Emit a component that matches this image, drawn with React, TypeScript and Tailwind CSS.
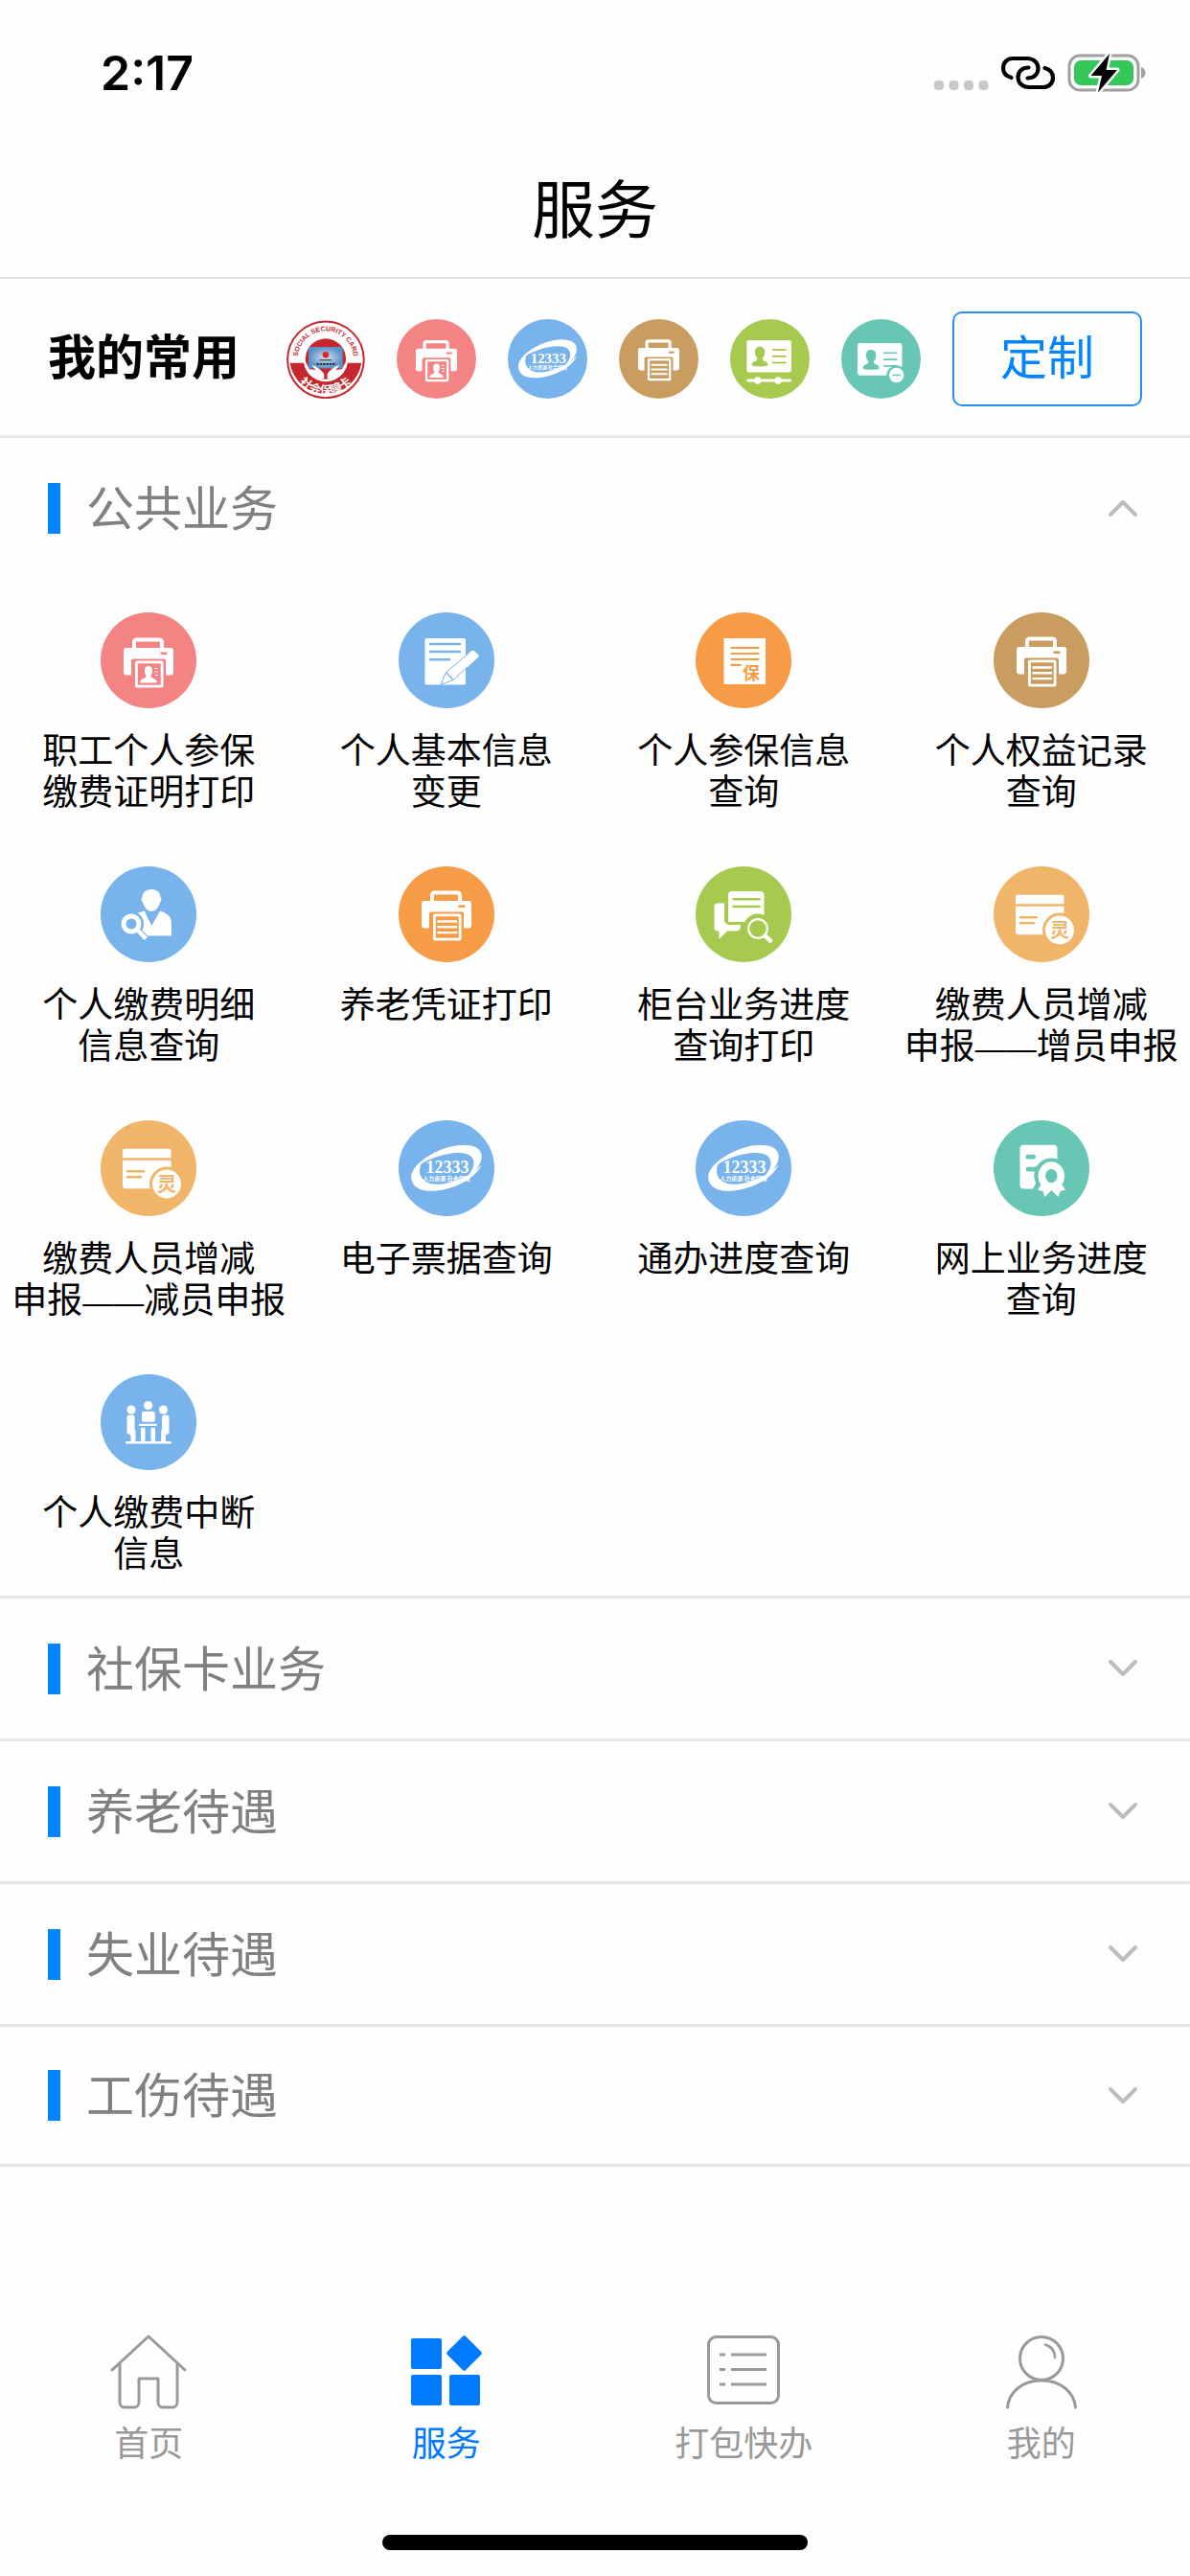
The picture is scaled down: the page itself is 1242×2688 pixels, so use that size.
import { useState } from "react";
import type { ReactNode } from "react";

const RED = "#f48384";
const BLUE = "#78b3ec";
const ORANGE = "#f69c47";
const BROWN = "#c99c60";
const GREEN = "#a6ca4f";
const SAND = "#f1b56a";
const TEAL = "#67c7b4";

/* ---------- round service icons, all on a 100 x 100 grid ---------- */

function Disc({ color, children }: { color: string; children: ReactNode }) {
  return (
    <svg viewBox="0 0 100 100" className="block h-full w-full" aria-hidden="true">
      <circle cx="50" cy="50" r="50" fill={color} />
      {children}
    </svg>
  );
}

function PrinterBody({ color }: { color: string }) {
  return (
    <g>
      <path d="M35 38V31a2.5 2.5 0 0 1 2.5-2.5H61.5A2.5 2.5 0 0 1 64 31V38" fill="none" stroke="#fff" strokeWidth="4" />
      <path d="M27 37H73a3 3 0 0 1 3 3V62.5a3 3 0 0 1-3 3H68V50.5a2 2 0 0 0-2-2H34a2 2 0 0 0-2 2V65.5H27a3 3 0 0 1-3-3V40a3 3 0 0 1 3-3Z" fill="#fff" />
      <rect x="62.5" y="41.5" width="7" height="2.5" fill={color} />
      <rect x="36" y="50.5" width="29.5" height="28" rx="2" fill="#fff" />
      <rect x="38.8" y="53.3" width="23.9" height="22.4" fill={color} />
    </g>
  );
}

function PrintPhoto() {
  return (
    <Disc color={RED}>
      <PrinterBody color={RED} />
      <path d="M50 56c3 0 4.2 2 4 5 0 2-.8 4-1.6 5 0 1.500.6 2 3 3 2.6 1 3.3 2 3.3 4.500H41.3c0-2.500.8-3.500 3.300-4.500 2.400-1 3-1.500 3-3-.8-1-1.600-3-1.600-5-.2-3 1-5 4-5Z" fill="#fff" />
      <path d="M56 58.500h4M56.500 62h3.500M57 65.500h3" stroke="#fff" strokeWidth="1.2" />
    </Disc>
  );
}

function PrintList({ color }: { color: string }) {
  return (
    <Disc color={color}>
      <g transform="translate(0 -1)">
        <PrinterBody color={color} />
        <path d="M40.5 58.5H61M40.5 64.3H61M40.5 70.1H61" stroke="#fff" strokeWidth="2.4" />
      </g>
    </Disc>
  );
}

function DocPen() {
  return (
    <Disc color={BLUE}>
      <rect x="27.5" y="27" width="42.5" height="48.5" rx="1.5" fill="#fff" />
      <path d="M33 33H64M33 41H64M33 49.3H53" stroke={BLUE} strokeWidth="2.6" strokeLinecap="round" />
      <path d="M44 75.5L49.5 62.5L76 40.3q1.5-1.3 3 0L83 44q1.3 1.5 0 3L57 70.5Z" fill="#fff" stroke={BLUE} strokeWidth="1" strokeLinejoin="round" />
      <path d="M49.5 62.5L57 70.5" stroke={BLUE} strokeWidth="1.2" />
      <path d="M76 40.3q1.5-1.3 3 0L83 44q1.3 1.5 0 3L72 57V44Z" fill="#fff" />
    </Disc>
  );
}

function DocBao() {
  return (
    <Disc color={ORANGE}>
      <rect x="29.5" y="27" width="43.5" height="48" fill="#fff" />
      <path d="M36.5 37H66.5M36.5 43H66.5M36.5 49H66.5M36.5 54.8H47.5" stroke={ORANGE} strokeWidth="2.2" />
      <text x="49" y="70" fontSize="18" fontWeight="700" fill={ORANGE}>保</text>
    </Disc>
  );
}

function PersonSearch() {
  return (
    <Disc color={BLUE}>
      <path d="M53 24c6 0 9.5 4 9.5 8.5 1.5.5 1 4-.5 5C60.5 43 57 47 53 47s-7.5-4-9-9.5c-1.5-1-2-4.5-.5-5C43.5 28 47 24 53 24Z" fill="#fff" />
      <path d="M45.500 46.500L53.300 62L62 46.500C70 49.500 74 52 74 60V72.500H40V50Z" fill="#fff" />
      <path d="M37.500 49L46 46.500L50 60L42 60Z" fill="#fff" />
      <circle cx="32" cy="60" r="13" fill={BLUE} />
      <path d="M37 66L47 76" stroke={BLUE} strokeWidth="8" />
      <circle cx="32" cy="60" r="8" fill="none" stroke="#fff" strokeWidth="5" />
      <path d="M39 67L47.5 75.5" stroke="#fff" strokeWidth="4.5" />
    </Disc>
  );
}

function ChatSearch() {
  return (
    <Disc color={GREEN}>
      <path d="M23 38.5H30V56a5 5 0 0 0 5 5H47V63a4.5 4.5 0 0 1-4.5 4.5H33L24.5 76V67.5H23a3.500 3.500 0 0 1-3.500-3.500V42a3.500 3.500 0 0 1 3.500-3.500Z" fill="#fff" />
      <path d="M38 26H67.5a4 4 0 0 1 4 4V58H34V30a4 4 0 0 1 4-4Z" fill="#fff" />
      <path d="M38.5 34.3H67.5M38.5 42H67.5" stroke={GREEN} strokeWidth="2.4" />
      <circle cx="65" cy="65" r="15.5" fill={GREEN} />
      <circle cx="65" cy="65" r="9.8" fill="none" stroke="#fff" strokeWidth="2.2" />
      <path d="M72.5 72.5L78 77.5" stroke="#fff" strokeWidth="4.5" strokeLinecap="round" />
    </Disc>
  );
}

function CardLing() {
  return (
    <Disc color={SAND}>
      <path d="M25 29.8H71.5a2 2 0 0 1 2 2V39.3H23V31.8a2 2 0 0 1 2-2Z" fill="#fff" />
      <path d="M23 41.8H73.5V71.3H26a3 3 0 0 1-3-3Z" fill="#fff" />
      <path d="M28 53.3H45M28 59.3H42" stroke={SAND} strokeWidth="2.6" strokeLinecap="round" />
      <circle cx="69" cy="66.5" r="18" fill={SAND} />
      <circle cx="69" cy="66.5" r="15" fill="#fff" />
      <text x="69" y="73.5" fontSize="20" fontWeight="700" textAnchor="middle" fill={SAND}>灵</text>
    </Disc>
  );
}

function Hotline() {
  return (
    <Disc color={BLUE}>
      <path d="M16 51C28 33 66 19 82 29C93 37 83 53 70 61C78 52 82 43 75 37C65 30 34 36 16 51Z" fill="#fff" />
      <path d="M25 43C9 52 10 68 24 72.500C42 78 78 66 87 46C74 61 46 69.500 33 66C22 62.500 19 53 25 43Z" fill="#fff" />
      <text x="51" y="55" fontSize="18" fontWeight="700" textAnchor="middle" fill="#fff" fontFamily="Liberation Serif, serif">12333</text>
      <text x="50" y="62.5" fontSize="6" fontWeight="700" textAnchor="middle" fill="#fff">人力资源 社会保障</text>
    </Disc>
  );
}

function DocRibbon() {
  return (
    <Disc color={TEAL}>
      <path d="M31.5 25.8H62.5a4 4 0 0 1 4 4V48H44V66L41 71.5H31.5a4 4 0 0 1-4-4V29.8a4 4 0 0 1 4-4Z" fill="#fff" />
      <rect x="33.5" y="35.8" width="10.5" height="4.8" rx="2.4" fill={TEAL} />
      <path d="M36 48.8H48V53.6H36a2.4 2.4 0 0 1 0-4.8Z" fill={TEAL} />
      <circle cx="60.3" cy="57.5" r="18" fill={TEAL} />
      <path d="M50.5 65L46 72.8L51.5 74L53.5 80L60.3 73L67.5 80L69.5 74L75 72.8L70 65Z" fill="#fff" />
      <ellipse cx="60.3" cy="58" rx="10" ry="11" fill={TEAL} stroke="#fff" strokeWidth="7.5" />
    </Disc>
  );
}

function Meeting() {
  return (
    <Disc color={BLUE}>
      <g fill="#fff">
        <circle cx="49.7" cy="32.5" r="4.6" />
        <circle cx="32" cy="37" r="4.6" />
        <circle cx="65.5" cy="37" r="4.6" />
        <rect x="43" y="38.8" width="13.8" height="11" rx="2" />
        <rect x="40" y="51.7" width="19" height="2.4" rx="1" />
        <rect x="42" y="55.8" width="4.5" height="14" />
        <rect x="52.5" y="55.8" width="4.5" height="14" />
        <path d="M29.500 42.500H33.500a2 2 0 0 1 2 2V57l1 2V70H31.500V63.500L27.500 61.500V44.500a2 2 0 0 1 2-2Z" />
        <path d="M69.500 42.500H66a2 2 0 0 0-2 2V57l-.8 2V70H68V63.500L71.500 61.500V44.500a2 2 0 0 0-2-2Z" />
        <rect x="25.8" y="70" width="48" height="2.4" rx="1.2" />
      </g>
    </Disc>
  );
}

function IdBust({ color }: { color: string }) {
  return (
    <path d="M37.5 34.5c4.3 0 6.5 3 6.3 7.2 0 3-1.3 6-3 7.3 0 2.6 1 3.4 3.6 4.2 2.6.8 3.4 2.4 3.1 5.3q-9.5 2.2-20 0c-.3-2.9.5-4.5 3.1-5.3 2.6-.8 3.6-1.6 3.6-4.2-1.7-1.3-3-4.3-3-7.3-.2-4.2 2-7.2 6.300-7.200Z" fill={color} />
  );
}

function IdSlider() {
  return (
    <Disc color={GREEN}>
      <rect x="21" y="26.5" width="56" height="40.5" rx="2.5" fill="#fff" />
      <IdBust color={GREEN} />
      <path d="M53 38.5H70.5M53 46.7H70.5M53 54.8H70.5" stroke="#95c11f" strokeWidth="1.7" />
      <path d="M22.5 77H75.5" stroke="#fff" strokeWidth="3.6" strokeLinecap="round" />
      <circle cx="34.7" cy="77" r="4.5" fill="#fff" />
      <circle cx="60.5" cy="77" r="4.5" fill="#fff" />
    </Disc>
  );
}

function IdMinus() {
  return (
    <Disc color={TEAL}>
      <rect x="20.5" y="30" width="56" height="40.8" rx="3" fill="#fff" />
      <g transform="translate(0 4)">
        <IdBust color={TEAL} />
        <path d="M53 38.5H70.5M53 46.7H70.5M53 54.8H70.5" stroke={TEAL} strokeWidth="2" />
      </g>
      <circle cx="69.5" cy="70.5" r="12.5" fill={TEAL} />
      <circle cx="69.5" cy="70.5" r="9.3" fill="#fff" />
      <path d="M64.5 70.5H74.5" stroke={TEAL} strokeWidth="1.8" />
    </Disc>
  );
}

function SocialCard() {
  return (
    <svg viewBox="0 0 100 100" className="block h-full w-full" aria-hidden="true">
      <defs>
        <path id="sc-top" d="M17 60A35 35 0 1 1 84 60" />
        <path id="sc-bottom" d="M6.500 51A44 44 0 0 0 94.500 51" />
        <radialGradient id="sc-card">
          <stop offset="0" stopColor="#d3e2f2" />
          <stop offset="1" stopColor="#5c8fc7" />
        </radialGradient>
      </defs>
      <circle cx="50.5" cy="51" r="48" fill="#fff" stroke="#c4282e" strokeWidth="2.4" />
      <path d="M5.500 55A45.500 45.500 0 0 0 95.500 55H78A28 28 0 0 1 23 55Z" fill="#c4282e" />
      <circle cx="50.5" cy="51" r="27.5" fill="#fff" />
      <circle cx="50.5" cy="50" r="25.5" fill="#c4282e" />
      <rect x="29" y="35" width="43" height="27" rx="2" fill="url(#sc-card)" />
      <circle cx="50.5" cy="45" r="4" fill="#e0252c" />
      <path d="M43 51.5H58" stroke="#444" strokeWidth="1.4" />
      <path d="M39 56.5H62" stroke="#222" strokeWidth="2" strokeDasharray="3 1" />
      <path d="M25 53L30 63L38 64L33 58C37 58 46 64 48.500 69V75C38 75 31 72 28 67Z" fill="#fff" />
      <path d="M76 53L71 63L63 64L68 58C64 58 55 64 52.500 69V75C63 75 70 72 73 67Z" fill="#fff" />
      <text fontSize="8.5" fontWeight="700" fill="#c4282e" fontFamily="Liberation Sans Narrow, Liberation Sans, sans-serif">
        <textPath href="#sc-top" startOffset="50%" textAnchor="middle">SOCIAL SECURITY CARD</textPath>
      </text>
      <text fontSize="15" fontWeight="700" fill="#fff">
        <textPath href="#sc-bottom" startOffset="50%" textAnchor="middle">社会保障卡</textPath>
      </text>
    </svg>
  );
}

/* ---------- page data ---------- */

const FAVORITES: { name: string; icon: ReactNode }[] = [
  { name: "社会保障卡", icon: <SocialCard /> },
  { name: "职工个人参保缴费证明打印", icon: <PrintPhoto /> },
  { name: "12333", icon: <Hotline /> },
  { name: "个人权益记录查询", icon: <PrintList color={BROWN} /> },
  { name: "社保卡进度", icon: <IdSlider /> },
  { name: "社保卡挂失", icon: <IdMinus /> },
];

const SERVICES: { lines: string[]; icon: ReactNode }[] = [
  { lines: ["职工个人参保", "缴费证明打印"], icon: <PrintPhoto /> },
  { lines: ["个人基本信息", "变更"], icon: <DocPen /> },
  { lines: ["个人参保信息", "查询"], icon: <DocBao /> },
  { lines: ["个人权益记录", "查询"], icon: <PrintList color={BROWN} /> },
  { lines: ["个人缴费明细", "信息查询"], icon: <PersonSearch /> },
  { lines: ["养老凭证打印"], icon: <PrintList color={ORANGE} /> },
  { lines: ["柜台业务进度", "查询打印"], icon: <ChatSearch /> },
  { lines: ["缴费人员增减", "申报——增员申报"], icon: <CardLing /> },
  { lines: ["缴费人员增减", "申报——减员申报"], icon: <CardLing /> },
  { lines: ["电子票据查询"], icon: <Hotline /> },
  { lines: ["通办进度查询"], icon: <Hotline /> },
  { lines: ["网上业务进度", "查询"], icon: <DocRibbon /> },
  { lines: ["个人缴费中断", "信息"], icon: <Meeting /> },
];

const SECTIONS = ["公共业务", "社保卡业务", "养老待遇", "失业待遇", "工伤待遇"];

const TABS: { label: string; icon: ReactNode }[] = [
  {
    label: "首页",
    icon: (
      <g fill="none" stroke="currentColor" strokeWidth="3" strokeLinejoin="round" strokeLinecap="round">
        <path d="M2 38L40 3L78 38" />
        <path d="M10 32V72a5 5 0 0 0 5 5H25a5 5 0 0 0 5-5V47H50V72a5 5 0 0 0 5 5H65a5 5 0 0 0 5-5V32" />
      </g>
    ),
  },
  {
    label: "服务",
    icon: (
      <g fill="currentColor">
        <rect x="3" y="5" width="32" height="32" rx="2" />
        <rect x="3" y="43" width="32" height="32" rx="2" />
        <rect x="43" y="43" width="32" height="32" rx="2" />
        <rect x="45" y="7" width="27" height="27" rx="2" transform="rotate(45 58.5 20.5)" />
      </g>
    ),
  },
  {
    label: "打包快办",
    icon: (
      <g fill="none" stroke="currentColor" strokeWidth="3">
        <rect x="3.5" y="3.5" width="73" height="69" rx="8" />
        <path d="M15 22H21M27 22H64M15 37.5H21M27 37.5H64M15 53H21M27 53H64" />
      </g>
    ),
  },
  {
    label: "我的",
    icon: (
      <g fill="none" stroke="currentColor" strokeWidth="3" strokeLinecap="round">
        <circle cx="40" cy="26" r="22.5" />
        <path d="M4.500 77C6 61 20 49 40 49S74 61 75.500 77" />
        <path d="M44 11.500C50 13.500 54 18.500 54 25" strokeWidth="2.5" />
      </g>
    ),
  },
];

function StatusBar() {
  return (
    <div className="flex h-[152px] shrink-0 items-center justify-between pr-[46px] pl-[105px]">
      <span className="font-[Inter,sans-serif] text-[50px] leading-none font-semibold">2:17</span>
      <div className="flex items-center gap-3">
        <svg width="58" height="38" viewBox="0 0 58 38" aria-hidden="true">
          <g fill="#c8c8c8">
            <rect x="1" y="27" width="10" height="10" rx="4" />
            <rect x="16.5" y="27" width="10" height="10" rx="4" />
            <rect x="32" y="27" width="10" height="10" rx="4" />
            <rect x="47.5" y="27" width="10" height="10" rx="4" />
          </g>
        </svg>
        <svg width="58" height="36" viewBox="0 0 58 36" aria-hidden="true">
          <g fill="none" stroke="#000" strokeWidth="4.2" strokeLinecap="round">
            <path d="M11.500 23C6 21.500 3 17.500 3 13C3 7 7.500 3 13 3H28C35 3 39.500 7.500 39.500 13.500C39.500 19.500 35 23.500 28.500 23.500" />
            <path d="M46.500 13C52 14.500 55 18.500 55 23C55 29 50.500 33 45 33H30C23 33 18.500 28.500 18.500 22.500C18.500 16.500 23 12.500 29.500 12.500" />
          </g>
        </svg>
        <svg width="82" height="42" viewBox="0 0 82 42" aria-hidden="true">
          <rect x="2" y="3" width="72" height="36" rx="11" fill="none" stroke="#a0a0a0" strokeWidth="3" />
          <path d="M77 15C80 16 81.500 18.500 81.500 21S80 26 77 27Z" fill="#a0a0a0" />
          <rect x="7" y="8" width="62" height="26" rx="7" fill="#34c759" />
          <path d="M44 1L24.500 24H36L32 41.500L52 18H40.500Z" fill="#000" stroke="#fefefe" strokeWidth="5" strokeLinejoin="round" paintOrder="stroke" />
        </svg>
      </div>
    </div>
  );
}

function Chevron({ open }: { open: boolean }) {
  return (
    <svg width="32" height="20" viewBox="0 0 32 20" aria-hidden="true">
      <path
        d={open ? "M3 17L16 4L29 17" : "M3 3L16 16L29 3"}
        fill="none"
        stroke="#bcbcbc"
        strokeWidth="4"
        strokeLinecap="round"
        strokeLinejoin="round"
      />
    </svg>
  );
}

// the long dash is set smaller so that its two halves join and stay short
function Line({ text }: { text: string }) {
  const [before, after] = text.split("——");
  return (
    <span className="block">
      {before}
      {after && <span className="font-['Liberation_Sans',sans-serif] text-[32px] leading-none">——</span>}
      {after}
    </span>
  );
}

function ServiceGrid() {
  return (
    <div className="grid grid-cols-4 gap-y-[55px] pt-9 pb-[21px]">
      {SERVICES.map((s, i) => (
        <button key={i} className="flex flex-col items-center gap-6">
          <span className="block size-[100px]">{s.icon}</span>
          <span className="block text-[37px] leading-[43px] whitespace-nowrap">
            {s.lines.map((l) => (
              <Line key={l} text={l} />
            ))}
          </span>
        </button>
      ))}
    </div>
  );
}

export default function App() {
  const [open, setOpen] = useState<string | null>("公共业务");
  const [tab, setTab] = useState("服务");

  return (
    <div className="flex min-h-screen flex-col bg-[#fefefe] font-[Roboto,'Noto_Sans_CJK_SC',sans-serif] text-black">
      <StatusBar />
      <header className="flex h-[139px] items-center justify-center border-b-2 border-[#e3e3e3]">
        <h1 className="text-[66px] leading-none">服务</h1>
      </header>

      <section className="flex h-[166px] items-center gap-[33px] border-b-3 border-[#e6e6e6] px-[50px] pt-[3px]">
        <h2 className="mr-[15px] text-[50px] leading-none font-bold whitespace-nowrap">我的常用</h2>
        {FAVORITES.map((f) => (
          <button key={f.name} aria-label={f.name} className="size-[83px] shrink-0">
            {f.icon}
          </button>
        ))}
        <button className="h-[99px] flex-1 rounded-[10px] border-2 border-[#2a8df2] text-[49px] leading-none text-[#0084ff]">
          定制
        </button>
      </section>

      <main>
        {SECTIONS.map((name) => (
          <section key={name} className="group border-b-3 border-[#e6e6e6]">
            <button
              onClick={() => setOpen(open === name ? null : name)}
              aria-expanded={open === name}
              className="flex h-[146px] w-full items-center pr-[54px] pl-[50px] group-last:h-[143px]"
            >
              <span className="h-[53px] w-[13px] bg-[#0084ff]" />
              <span className="mr-auto ml-[27px] pt-[3px] text-[50px] leading-none text-[#808080]">{name}</span>
              <Chevron open={open === name} />
            </button>
            {open === name && name === "公共业务" && <ServiceGrid />}
          </section>
        ))}
      </main>

      <nav className="mt-auto grid grid-cols-4 pb-[72px]">
        {TABS.map((t) => (
          <button
            key={t.label}
            onClick={() => setTab(t.label)}
            className={`flex flex-col items-center gap-[14px] text-[36px] leading-[44px] ${
              tab === t.label ? "text-[#007aff]" : "text-[#999999]"
            }`}
          >
            <svg width="80" height="80" viewBox="0 0 80 80" aria-hidden="true">
              {t.icon}
            </svg>
            {t.label}
          </button>
        ))}
      </nav>
      <div className="mx-auto mb-[27px] h-4 w-[444px] rounded-full bg-black" />
    </div>
  );
}
